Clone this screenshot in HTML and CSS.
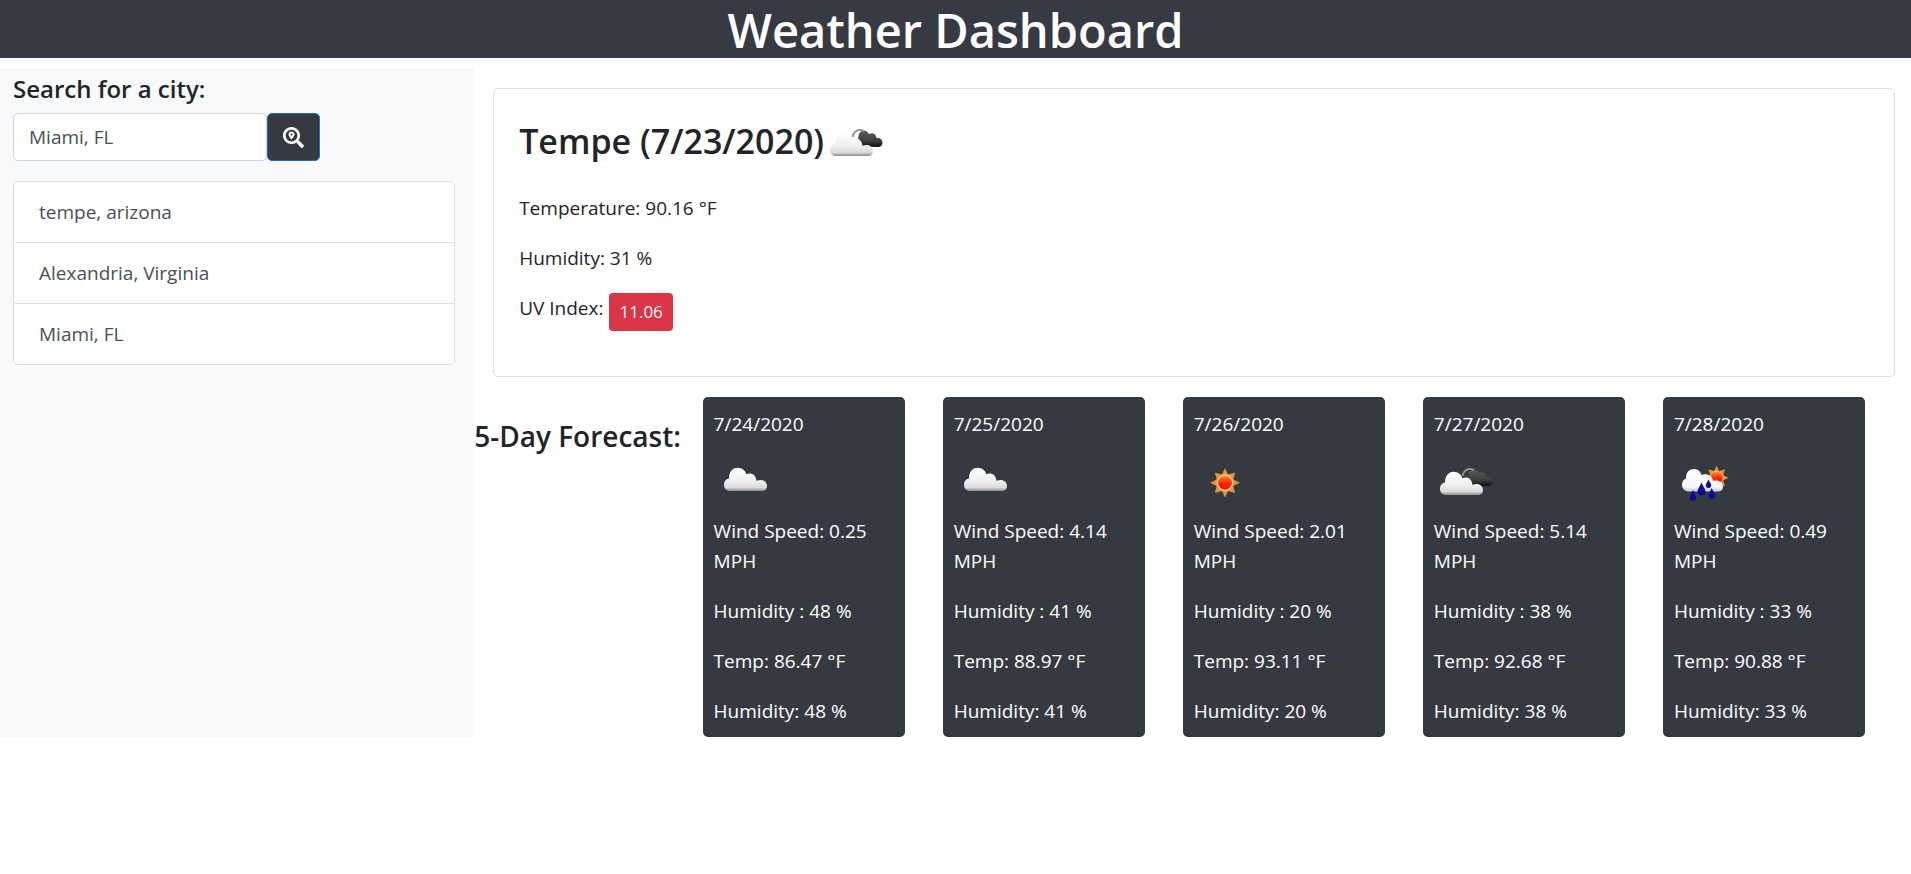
FILE: index.html
```html
<!DOCTYPE html>
<html lang="en">
<head>
<meta charset="utf-8">
<meta name="viewport" content="width=device-width, initial-scale=1">
<title>Weather Dashboard</title>
<link rel="stylesheet" href="styles.css">
</head>
<body>
<svg class="sprite" aria-hidden="true">
  <defs>
    <linearGradient id="cloud-fill" x1="0" y1="0" x2="0" y2="1">
      <stop offset="0" stop-color="#ffffff"/>
      <stop offset="0.55" stop-color="#f0f0f0"/>
      <stop offset="0.85" stop-color="#dadada"/>
      <stop offset="1" stop-color="#8c8c8c"/>
    </linearGradient>
    <linearGradient id="white-fill" x1="0" y1="0" x2="0" y2="1">
      <stop offset="0" stop-color="#ffffff"/>
      <stop offset="0.8" stop-color="#f6f6f8"/>
      <stop offset="1" stop-color="#c8c8d0"/>
    </linearGradient>
    <linearGradient id="dark-fill" x1="0" y1="0" x2="0" y2="1">
      <stop offset="0" stop-color="#5c5c5c"/>
      <stop offset="0.65" stop-color="#3c3c3c"/>
      <stop offset="1" stop-color="#0c0c0c"/>
    </linearGradient>
    <linearGradient id="sun-fill" x1="0" y1="0" x2="0" y2="1">
      <stop offset="0" stop-color="#ff9a1c"/>
      <stop offset="0.5" stop-color="#ff2a08"/>
      <stop offset="1" stop-color="#ff0800"/>
    </linearGradient>
    <path id="cloud-shape" d="M16 42C12.500 42 10 39.500 10 36C10 32.500 12 30 15 29.500C15 23 18.500 18.700 23.500 18.700C28 18.700 31.500 21.500 32.300 25.300C37 23 42 25.500 42.500 31.800C48 29.500 53 32 53 37C53 40 51 42 48 42Z"/>
    <symbol id="cloud" viewBox="0 0 62 62">
      <use href="#cloud-shape" fill="url(#cloud-fill)"/>
    </symbol>
    <symbol id="broken-clouds" viewBox="0 0 62 62">
      <path d="M36 36.500C33 33 34 28 35 24C37 20 42 19 45 24C49 22 52 24 52.500 28C56 27.500 58.500 29.500 58.500 32.500C58.500 35.500 56.500 37 54 37Z" fill="url(#dark-fill)"/>
      <path d="M28.500 27C29.500 21.500 34 18.500 40 21" fill="none" stroke="#939393" stroke-width="2"/>
      <use href="#cloud-shape" x="-4" y="4" fill="url(#cloud-fill)"/>
    </symbol>
    <symbol id="sun" viewBox="0 0 62 62">
      <path d="M31 19L34 25.500L41.200 23.500L39.300 30.500L46 33.700L39.300 37L41.200 44L34 42L31 48.500L28 42L20.800 44L22.700 37L16 33.700L22.700 30.500L20.800 23.500L28 25.500Z" fill="#de9738"/>
      <circle cx="31" cy="33.700" r="7.700" fill="url(#sun-fill)" stroke="#ffc39c" stroke-width="1.500"/>
    </symbol>
    <symbol id="sun-rain" viewBox="0 0 62 62">
      <path d="M42.700 16.500L45 22L51 20.200L49.200 26L54.500 28.700L49.200 31.500L51 37.200L45 35.500L42.700 41L40 35.500L34.400 37.200L36.200 31.500L31 28.700L36.200 26L34.400 20.200L40 22Z" fill="#de9738"/>
      <circle cx="42.700" cy="28.700" r="6.500" fill="url(#sun-fill)" stroke="#ffae70"/>
      <path d="M14 42.500C10.500 42 8 39.500 8 35.500C8 32 10 30 12 29.500C12 23.500 15 20 19.500 20C23.500 20 26.500 22 27.500 26C33 24 38.500 27 39 32C44 30.500 49 33 49 37.500C49 40.500 47 42.500 44 42.500Z" fill="url(#white-fill)"/>
      <g fill="#0b0b99">
        <path d="M19 41C20.500 44.500 22.300 46.500 22.300 48.500A3.300 3.300 0 0 1 15.700 48.500C15.700 46.500 17.500 44.500 19 41Z"/>
        <path d="M27.500 33.500C29 37.500 31.500 40 31.500 42.500A4 4 0 0 1 23.500 42.500C23.500 40 26 37.500 27.500 33.500Z"/>
        <path d="M34.500 30.500C35.500 33 37.200 34.500 37.200 36.300A2.700 2.700 0 0 1 31.800 36.300C31.800 34.500 33.500 33 34.500 30.500Z"/>
        <path d="M37.700 39C39 42.500 41.200 44.500 41.200 46.500A3.500 3.500 0 0 1 34.200 46.500C34.200 44.500 36.500 42.500 37.700 39Z"/>
      </g>
    </symbol>
  </defs>
</svg>

<header class="banner"><h1 class="banner-title">Weather Dashboard</h1></header>

<div class="layout">
  <aside class="sidebar">
    <label class="search-label" for="city">Search for a city:</label>
    <form class="search">
      <input class="search-input" id="city" type="text" value="Miami, FL">
      <button class="search-button" type="button" aria-label="Search">
        <svg class="search-icon" viewBox="0 0 512 512" fill="currentColor" aria-hidden="true"><path d="M505.040 442.660l-99.710-99.690c-4.500-4.500-10.600-7-17-7h-16.300c27.600-35.300 44-79.690 44-127.990C416.030 93.090 322.920 0 208.020 0S0 93.090 0 207.980s93.110 207.980 208.020 207.980c48.300 0 92.710-16.400 128.010-44v16.300c0 6.400 2.500 12.500 7 17l99.710 99.690c9.400 9.400 24.600 9.400 33.900 0l28.300-28.300c9.400-9.400 9.400-24.590.1-33.990zm-297.020-90.700c-79.540 0-144-64.340-144-143.980 0-79.530 64.350-143.980 144-143.980 79.540 0 144 64.340 144 143.980 0 79.530-64.350 143.980-144 143.980zm.02-239.960c-40.780 0-73.840 33.050-73.840 73.830 0 32.960 48.260 93.050 66.750 114.860a9.240 9.240 0 0 0 14.180 0c18.490-21.810 66.750-81.890 66.750-114.860 0-40.780-33.060-73.830-73.840-73.830zm0 96c-13.260 0-24-10.750-24-24 0-13.260 10.750-24 24-24s24 10.750 24 24c0 13.250-10.750 24-24 24z"/></svg>
      </button>
    </form>
    <ul class="history">
      <li class="history-item"><button class="history-button" type="button">tempe, arizona</button></li>
      <li class="history-item"><button class="history-button" type="button">Alexandria, Virginia</button></li>
      <li class="history-item"><button class="history-button" type="button">Miami, FL</button></li>
    </ul>
  </aside>

  <main class="main">
    <section class="current">
      <div class="current-head">
        <h2 class="current-title">Tempe (7/23/2020)</h2>
        <svg class="weather-icon" role="img" aria-label="Broken clouds"><use href="#broken-clouds"/></svg>
      </div>
      <p class="reading">Temperature: 90.16 °F</p>
      <p class="reading">Humidity: 31 %</p>
      <p class="reading">UV Index: <button class="uv" type="button">11.06</button></p>
    </section>

    <section class="forecast">
      <h3 class="forecast-title">5-Day Forecast:</h3>
      <div class="days">
        <article class="day">
          <p class="day-date">7/24/2020</p>
          <svg class="weather-icon day-icon" role="img" aria-label="Cloudy"><use href="#cloud"/></svg>
          <p class="day-text">Wind Speed: 0.25 MPH</p>
          <p class="day-text">Humidity : 48 %</p>
          <p class="day-text">Temp: 86.47 °F</p>
          <p class="day-text">Humidity: 48 %</p>
        </article>
        <article class="day">
          <p class="day-date">7/25/2020</p>
          <svg class="weather-icon day-icon" role="img" aria-label="Cloudy"><use href="#cloud"/></svg>
          <p class="day-text">Wind Speed: 4.14 MPH</p>
          <p class="day-text">Humidity : 41 %</p>
          <p class="day-text">Temp: 88.97 °F</p>
          <p class="day-text">Humidity: 41 %</p>
        </article>
        <article class="day">
          <p class="day-date">7/26/2020</p>
          <svg class="weather-icon day-icon" role="img" aria-label="Sunny"><use href="#sun"/></svg>
          <p class="day-text">Wind Speed: 2.01 MPH</p>
          <p class="day-text">Humidity : 20 %</p>
          <p class="day-text">Temp: 93.11 °F</p>
          <p class="day-text">Humidity: 20 %</p>
        </article>
        <article class="day">
          <p class="day-date">7/27/2020</p>
          <svg class="weather-icon day-icon" role="img" aria-label="Broken clouds"><use href="#broken-clouds"/></svg>
          <p class="day-text">Wind Speed: 5.14 MPH</p>
          <p class="day-text">Humidity : 38 %</p>
          <p class="day-text">Temp: 92.68 °F</p>
          <p class="day-text">Humidity: 38 %</p>
        </article>
        <article class="day">
          <p class="day-date">7/28/2020</p>
          <svg class="weather-icon day-icon" role="img" aria-label="Sun and rain"><use href="#sun-rain"/></svg>
          <p class="day-text">Wind Speed: 0.49 MPH</p>
          <p class="day-text">Humidity : 33 %</p>
          <p class="day-text">Temp: 90.88 °F</p>
          <p class="day-text">Humidity: 33 %</p>
        </article>
      </div>
    </section>
  </main>
</div>
</body>
</html>
```
FILE: styles.css
```css
* {
  box-sizing: border-box;
}

body {
  margin: 0;
  background: #fff;
  color: #212529;
  font-family: "Segoe UI", "Open Sans", sans-serif;
  font-size: 19px;
  line-height: 30px;
}

h1,
h2,
h3,
p,
ul {
  margin: 0;
  padding: 0;
}

button,
input {
  margin: 0;
  font: inherit;
}

.sprite {
  position: absolute;
  width: 0;
  height: 0;
}

.banner {
  margin-bottom: 10px;
  padding-top: 2px;
  background: #363a42;
  color: #fff;
  text-align: center;
}

.banner-title {
  font-size: 47px;
  font-weight: 600;
  line-height: 56px;
}

.layout {
  display: grid;
  grid-template-columns: 33fr 100fr;
}

.sidebar {
  padding: 6px 19px 20px 13px;
  background: #f8f9fb;
}

.search-label {
  display: block;
  margin-bottom: 9px;
  font-size: 24px;
  font-weight: 600;
}

.search {
  display: flex;
  margin-bottom: 20px;
}

.search-input {
  width: 254px;
  height: 48px;
  padding: 0 15px;
  border: 1px solid #ced4da;
  border-radius: 5px;
  background: #fff;
  color: #495057;
}

.search-button {
  display: flex;
  align-items: center;
  justify-content: center;
  width: 53px;
  height: 48px;
  padding: 0;
  border: 1px solid #1b6fc8;
  border-radius: 5px;
  background: #343a40;
  color: #fff;
}

.search-icon {
  width: 21px;
  height: 21px;
}

.history {
  border: 1px solid #dcdfe2;
  border-radius: 5px;
  background: #fff;
  list-style: none;
  overflow: hidden;
}

.history-item + .history-item {
  border-top: 1px solid #dcdfe2;
}

.history-button {
  display: block;
  width: 100%;
  padding: 15px 25px;
  border: 0;
  background: transparent;
  color: #495057;
  text-align: left;
}

.main {
  min-width: 0;
  padding-top: 20px;
}

.current {
  margin: 0 16px 20px 19px;
  padding: 21px 25px 45px;
  border: 1px solid #dfdfdf;
  border-radius: 5px;
}

.current-head {
  display: flex;
  margin-bottom: 21px;
}

.current-title {
  font-size: 34px;
  font-weight: 600;
  line-height: 62px;
}

.weather-icon {
  display: block;
  flex: none;
  width: 62px;
  height: 62px;
}

.reading {
  margin-bottom: 20px;
}

.reading:last-child {
  display: flex;
  align-items: flex-start;
  gap: 6px;
  margin: 0;
}

.uv {
  padding: 4px 10px;
  border: 0;
  border-radius: 4px;
  background: #dc3545;
  color: #fff;
  font-size: 17px;
}

.forecast {
  display: grid;
  grid-template-columns: 159fr 841fr;
}

.forecast-title {
  padding-top: 21px;
  font-size: 28px;
  font-weight: 600;
  line-height: 36px;
  white-space: nowrap;
}

.days {
  display: grid;
  grid-template-columns: repeat(5, 1fr);
  gap: 38px;
  padding-right: 46px;
}

.day {
  padding: 12px 11px 11px;
  border-radius: 5px;
  background: #343a40;
  color: #fff;
}

.day-date {
  margin-bottom: 10px;
}

.day-icon {
  margin-bottom: 5px;
}

.day-text + .day-text {
  margin-top: 20px;
}
```
